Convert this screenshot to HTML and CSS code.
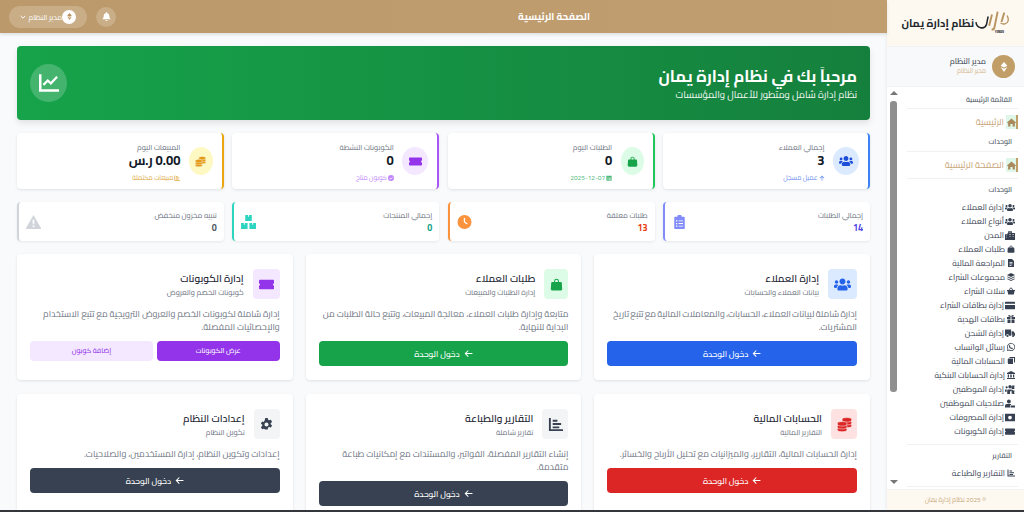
FILE: index.html
```html
<!DOCTYPE html>
<html lang="ar" dir="rtl">
<head>
<meta charset="utf-8">
<title>الصفحة الرئيسية</title>
<link rel="stylesheet" href="styles.css">
</head>
<body>
<svg class="defs" aria-hidden="true">
<symbol id="i-users" viewBox="0 0 640 512"><path d="M96 224c35.300 0 64-28.700 64-64s-28.700-64-64-64-64 28.700-64 64 28.700 64 64 64zm448 0c35.300 0 64-28.700 64-64s-28.700-64-64-64-64 28.700-64 64 28.700 64 64 64zm32 32h-64c-17.600 0-33.500 7.100-45.100 18.600 40.300 22.100 68.900 62 75.100 109.400h66c17.700 0 32-14.300 32-32v-32c0-35.300-28.700-64-64-64zm-256 0c61.900 0 112-50.100 112-112S381.900 32 320 32 208 82.100 208 144s50.100 112 112 112zm76.800 32h-8.300c-20.800 10-43.900 16-68.500 16s-47.600-6-68.500-16h-8.300C179.600 288 128 339.600 128 403.200V432c0 26.500 21.500 48 48 48h288c26.500 0 48-21.500 48-48v-28.800c0-63.600-51.600-115.200-115.200-115.200zm-223.700-13.400C161.500 263.100 145.600 256 128 256H64c-35.300 0-64 28.700-64 64v32c0 17.700 14.300 32 32 32h65.900c6.300-47.400 34.900-87.300 75.200-109.400z"/></symbol>
<symbol id="i-bag" viewBox="0 0 16 16"><path d="M5 5V4a3 3 0 0 1 6 0v1h2.500a1 1 0 0 1 1 1l.5 7.500a2 2 0 0 1-2 2H3a2 2 0 0 1-2-2L1.500 6a1 1 0 0 1 1-1zm1.300 0h3.400V4a1.700 1.700 0 0 0-3.400 0z"/></symbol>
<symbol id="i-ticket" viewBox="0 0 16 12"><path d="M1 1h14a1 1 0 0 1 1 1v2.800a1.200 1.200 0 0 0 0 2.400V10a1 1 0 0 1-1 1H1a1 1 0 0 1-1-1V7.200a1.200 1.200 0 0 0 0-2.400V2a1 1 0 0 1 1-1z"/></symbol>
<symbol id="i-coins" viewBox="0 0 16 16"><g stroke="#fff" stroke-opacity=".75" stroke-width=".7"><ellipse cx="10.500" cy="9" rx="5.200" ry="2.400"/><ellipse cx="10.500" cy="6" rx="5.200" ry="2.400"/><ellipse cx="10.500" cy="3" rx="5.200" ry="2.400"/><ellipse cx="5.500" cy="13.300" rx="5.200" ry="2.400"/><ellipse cx="5.500" cy="10.300" rx="5.200" ry="2.400"/><ellipse cx="5.500" cy="7.300" rx="5.200" ry="2.400"/></g></symbol>
<symbol id="i-chart" viewBox="0 0 16 16"><path d="M0 1h2v12h14v2H0z"/><path d="M3.500 9.500 7 6l2.500 2.300L14.500 3" fill="none" stroke="currentColor" stroke-width="1.800"/></symbol>
<symbol id="i-bars" viewBox="0 0 16 16"><path d="M1 1h2v12h13v2H1zM5 3h5v2H5zm0 3.500h9v2H5zM5 10h7v2H5z"/></symbol>
<symbol id="i-cal" viewBox="0 0 16 16"><path d="M1 2h14v13H1z"/><path d="M3 6h10v7H3z" fill="#fff" opacity=".3"/><path d="M9 9h3v3H9z" fill="#fff"/></symbol>
<symbol id="i-check" viewBox="0 0 16 16"><path fill-rule="evenodd" d="M8 0a8 8 0 1 1 0 16A8 8 0 0 1 8 0zm3.600 5.200L7 9.800 4.800 7.600 3.600 8.800 7 12.200l5.800-5.800z"/></symbol>
<symbol id="i-up" viewBox="0 0 16 16"><path d="M7 15V5L3 9 1.700 7.700 8 1l6.300 6.700L13 9 9 5v10z"/></symbol>
<symbol id="i-clip" viewBox="0 0 12 16"><path d="M1 2h2.500a2.500 2.500 0 0 1 5 0H11a1 1 0 0 1 1 1v12a1 1 0 0 1-1 1H1a1 1 0 0 1-1-1V3a1 1 0 0 1 1-1z"/><path d="M2 6h1.500v1.500H2zm3 .200h5v1H5zm-3 2.800h1.500v1.500H2zm3 .200h5v1H5zM2 12h1.500v1.500H2zm3 .200h5v1H5z" fill="#fff"/></symbol>
<symbol id="i-clock" viewBox="0 0 16 16"><path d="M8 0a8 8 0 1 1 0 16A8 8 0 0 1 8 0z"/><path d="M7.200 3.500h1.500v4.200l3 2-.8 1.200-3.700-2.500z" fill="#fff"/></symbol>
<symbol id="i-boxes" viewBox="0 0 16 15"><path d="M4.500 0h3v2h1V0h3v6.500h-7zM0 8.500h3v2h1v-2h3V15H0zM9 8.500h3v2h1v-2h3V15H9z"/></symbol>
<symbol id="i-warn" viewBox="0 0 16 15"><path fill-rule="evenodd" d="M8 0l8 14a.7.7 0 0 1-.6 1H.6a.7.7 0 0 1-.6-1zM7 5l.3 5h1.400L9 5zm1 6a1 1 0 1 0 0 2 1 1 0 0 0 0-2z"/></symbol>
<symbol id="i-gear" viewBox="0 0 16 16"><path fill-rule="evenodd" d="M6.500 0h3l.5 2.200 1.200.7 2.200-.7 1.500 2.600-1.700 1.500v1.400l1.700 1.500-1.500 2.600-2.200-.7-1.200.7-.5 2.200h-3L6 13.800l-1.200-.7-2.200.7-1.500-2.600 1.700-1.500V8.300L1.100 6.800l1.500-2.600 2.200.7L6 2.200zM8 5.500a2.500 2.500 0 1 0 0 5 2.500 2.500 0 0 0 0-5z"/></symbol>
<symbol id="i-arrow" viewBox="0 0 16 16"><path d="M7 2 8.300 3.300 4.600 7H15v2H4.600l3.700 3.700L7 14 1 8z"/></symbol>
<symbol id="i-bell" viewBox="0 0 16 16"><path d="M8 0a1 1 0 0 1 1 1v.8A5 5 0 0 1 13 6.700c0 3 .8 4.300 2 5.300v1H1v-1c1.200-1 2-2.300 2-5.300A5 5 0 0 1 7 1.800V1a1 1 0 0 1 1-1zM6 14h4a2 2 0 0 1-4 0z"/></symbol>
<symbol id="i-home" viewBox="0 0 16 14"><path d="M8 0l8 7-1 1.200-1-.8V14h-4V9.500H6V14H2V7.400l-1 .8L0 7z"/></symbol>
<symbol id="i-diamond" viewBox="0 0 12 12"><path d="M6 0l4 4.500L6 6.500 2 4.500zM2 6l4 2 4-2-4 6z"/></symbol>
<symbol id="i-city" viewBox="0 0 16 14"><path fill-rule="evenodd" d="M0 5h4V3h1V0h6v3h5v11H0zm7-3v1h2V2zm0 3v1h2V5zm0 3v1h2V8zM2 7v1h1V7zm0 3v1h1v-1zm10-5v1h2V5zm0 3v1h2V8z"/></symbol>
<symbol id="i-doc" viewBox="0 0 12 16"><path fill-rule="evenodd" d="M0 0h8l4 4v12H0zm3 6v1.500h6V6zm0 3v1.500h6V9zm0 3v1.500h4V12z"/></symbol>
<symbol id="i-layers" viewBox="0 0 16 16"><path d="M8 0l8 4-8 4-8-4zM1.500 6.800 8 10l6.500-3.200L16 8l-8 4-8-4zm0 4L8 14l6.500-3.200L16 12l-8 4-8-4z"/></symbol>
<symbol id="i-basket" viewBox="0 0 16 14"><path d="M0 5h3.500L7 0l1.200.8L5.300 5h5.400L7.800.8 9 0l3.500 5H16v2h-1l-1.400 7H2.400L1 7H0z"/></symbol>
<symbol id="i-card" viewBox="0 0 16 12"><path d="M1 0h14a1 1 0 0 1 1 1v2H0V1a1 1 0 0 1 1-1zM0 5h16v6a1 1 0 0 1-1 1H1a1 1 0 0 1-1-1z"/></symbol>
<symbol id="i-gift" viewBox="0 0 16 16"><path d="M0 4h7v4H0zm9 0h7v4H9zM1 9h6v7H1zm8 0h6v7H9zM4 0c2 0 3.500 1.500 4 3.500C8.500 1.500 10 0 12 0s2 3.500-1 3.500H5C2 3.500 2 0 4 0z"/></symbol>
<symbol id="i-truck" viewBox="0 0 18 14"><path d="M0 0h11v11H7a2.500 2.500 0 0 0-5 0H0zm12 3h3l3 4v4h-1.500a2.500 2.500 0 0 0-4.500-.5zM4.500 9.500a2 2 0 1 1 0 4 2 2 0 0 1 0-4zm10 0a2 2 0 1 1 0 4 2 2 0 0 1 0-4z"/></symbol>
<symbol id="i-wa" viewBox="0 0 16 16"><path fill-rule="evenodd" d="M8 0a8 8 0 1 1-3.800 15L0 16l1.100-4.100A8 8 0 0 1 8 0zm0 1.500a6.500 6.500 0 0 0-5.400 10l-.6 2.300 2.400-.6A6.500 6.500 0 1 0 8 1.500zM5.500 4.200l1.200 2-.7 1c.6 1.200 1.500 2 2.800 2.700l1-.8 2 1.200c-.2 1.300-1.500 2-2.700 1.700-3-.6-5-3-5.300-5.500 0-1 .7-2 1.700-2.300z"/></symbol>
<symbol id="i-ledger" viewBox="0 0 16 16"><path d="M5 0h11v11h-2V2H5zM2 3h10v11H2zM0 5h1v2H0zm0 4h1v2H0z"/></symbol>
<symbol id="i-bank" viewBox="0 0 16 16"><path d="M8 0l8 4v2H0V4zM1.500 7h2.500v6H1.500zm5 0h3v6h-3zm5.500 0h2.500v6H12zM0 14h16v2H0z"/></symbol>
<symbol id="i-ucog" viewBox="0 0 18 16"><path d="M3 2a2 2 0 1 1 0 4 2 2 0 0 1 0-4zm6-2a3 3 0 1 1 0 6 3 3 0 0 1 0-6zM5 8h7v3H9v5H4V9zM0 8h3v4H0zm14-8 1 1 2 0v2l-1 1 1 1v2h-2l-1 1-1-1h-1V2h1zm0 9 1 1h2v2l-1 1 1 1v2h-3l-1-1-1 1v-6z"/></symbol>
<symbol id="i-ulock" viewBox="0 0 18 14"><path d="M7 0a3.500 3.500 0 1 1 0 7 3.500 3.500 0 0 1 0-7zM3 8h8v1.500H9V14H0v-2.500A3.500 3.500 0 0 1 3 8zm7 2.500h8V14h-8z"/></symbol>
<symbol id="i-money" viewBox="0 0 16 12"><path fill-rule="evenodd" d="M0 0h16v12H0zm8 3a3 3 0 1 0 0 6 3 3 0 0 0 0-6z"/></symbol>
</svg>

<div class="app">
  <aside class="side">
    <div class="brand">
      <svg class="logo" viewBox="0 0 36 24" aria-hidden="true">
        <path d="M1 11c1 7 9 8 11 3 1-3 1-6 2-9" fill="none" stroke="#23262b" stroke-width="1.600"/>
        <path d="M18 3l-3 12M24 0l-3.500 17c-.4 2-2 2-3 2M31 1l-3 10" fill="none" stroke="#b9935f" stroke-width="2"/>
        <path d="M27 12c3 2 7 1 8-2 .5-2 0-4-1-6" fill="none" stroke="#b9935f" stroke-width="1.400"/>
        <text class="logo-mark" x="21" y="23" direction="ltr">YEMAN</text>
      </svg>
      <span class="brand-name">نظام إدارة يمان</span>
    </div>
    <div class="user">
      <span class="avatar"><svg class="ico i10"><use href="#i-diamond"/></svg></span>
      <div class="user-text">
        <div class="user-name">مدير النظام</div>
        <div class="user-role">مدير النظام</div>
      </div>
    </div>
    <div class="side-body">
      <nav class="nav">
        <div class="nav-label lab-a">القائمة الرئيسية</div>
        <a class="nav-main"><span class="nav-home"><svg class="ico i9"><use href="#i-home"/></svg></span>الرئيسية</a>
        <div class="nav-label lab-b">الوحدات</div>
        <div class="nav-sec">
          <a class="nav-main"><span class="nav-home"><svg class="ico i9"><use href="#i-home"/></svg></span>الصفحة الرئيسية</a>
        </div>
        <div class="nav-label lab-c">الوحدات</div>
        <ul class="nav-list nav-sec">
          <li><svg class="ico"><use href="#i-users"/></svg>إدارة العملاء</li>
          <li><svg class="ico"><use href="#i-users"/></svg>أنواع العملاء</li>
          <li><svg class="ico"><use href="#i-city"/></svg>المدن</li>
          <li class="n"><svg class="ico"><use href="#i-bag"/></svg>طلبات العملاء</li>
          <li class="n"><svg class="ico"><use href="#i-doc"/></svg>المراجعة المالية</li>
          <li class="n"><svg class="ico"><use href="#i-layers"/></svg>مجموعات الشراء</li>
          <li class="n"><svg class="ico"><use href="#i-basket"/></svg>سلات الشراء</li>
          <li><svg class="ico"><use href="#i-card"/></svg>إدارة بطاقات الشراء</li>
          <li class="n"><svg class="ico"><use href="#i-gift"/></svg>بطاقات الهدية</li>
          <li><svg class="ico"><use href="#i-truck"/></svg>إدارة الشحن</li>
          <li class="n"><svg class="ico"><use href="#i-wa"/></svg>رسائل الواتساب</li>
          <li class="n"><svg class="ico"><use href="#i-ledger"/></svg>الحسابات المالية</li>
          <li class="n"><svg class="ico"><use href="#i-bank"/></svg>إدارة الحسابات البنكية</li>
          <li><svg class="ico"><use href="#i-ucog"/></svg>إدارة الموظفين</li>
          <li><svg class="ico"><use href="#i-ulock"/></svg>صلاحيات الموظفين</li>
          <li><svg class="ico"><use href="#i-money"/></svg>إدارة المصروفات</li>
          <li><svg class="ico"><use href="#i-ticket"/></svg>إدارة الكوبونات</li>
        </ul>
        <div class="nav-label lab-c">التقارير</div>
        <ul class="nav-list nav-sec">
          <li class="n"><svg class="ico"><use href="#i-bars"/></svg>التقارير والطباعة</li>
        </ul>
      </nav>
      <div class="scrollbar">
        <span class="arr-up"></span>
        <span class="thumb"></span>
        <span class="arr-down"></span>
      </div>
    </div>
    <footer class="side-foot">© 2025 نظام إدارة يمان</footer>
  </aside>

  <div class="main">
    <header class="top">
      <h1 class="top-title">الصفحة الرئيسية</h1>
      <div class="top-tools">
        <span class="bell"><svg class="ico i9"><use href="#i-bell"/></svg></span>
        <span class="pill">
          <span class="pill-av"><svg class="ico i7"><use href="#i-diamond"/></svg></span>
          <span class="pill-name">مدير النظام</span>
          <svg class="chev" viewBox="0 0 10 6"><path d="M1 1l4 4 4-4" fill="none" stroke="#fff" stroke-width="1.600"/></svg>
        </span>
      </div>
    </header>

    <main class="content">
      <section class="hero">
        <div>
          <h2 class="hero-title">مرحباً بك في نظام إدارة يمان</h2>
          <p class="hero-sub">نظام إدارة شامل ومتطور للأعمال والمؤسسات</p>
        </div>
        <span class="hero-ico"><svg class="ico i20"><use href="#i-chart"/></svg></span>
      </section>

      <section class="stats">
        <div class="stat c-blue">
          <span class="stat-ico w26"><svg class="ico i14"><use href="#i-users"/></svg></span>
          <div class="stat-text"><div class="stat-label">إجمالي العملاء</div><div class="stat-val">3</div><div class="stat-sub"><svg class="ico i6"><use href="#i-up"/></svg>عميل مسجل</div></div>
        </div>
        <div class="stat c-green">
          <span class="stat-ico w23"><svg class="ico i11"><use href="#i-bag"/></svg></span>
          <div class="stat-text"><div class="stat-label">الطلبات اليوم</div><div class="stat-val">0</div><div class="stat-sub"><svg class="ico i6"><use href="#i-cal"/></svg>2025-12-07</div></div>
        </div>
        <div class="stat c-purple">
          <span class="stat-ico w26"><svg class="ico i13"><use href="#i-ticket"/></svg></span>
          <div class="stat-text"><div class="stat-label">الكوبونات النشطة</div><div class="stat-val">0</div><div class="stat-sub"><svg class="ico i6"><use href="#i-check"/></svg>كوبون متاح</div></div>
        </div>
        <div class="stat c-amber">
          <span class="stat-ico w24"><svg class="ico i11"><use href="#i-coins"/></svg></span>
          <div class="stat-text"><div class="stat-label">المبيعات اليوم</div><div class="stat-val">0.00 ر.س</div><div class="stat-sub"><svg class="ico i6"><use href="#i-bars"/></svg>مبيعات مكتملة</div></div>
        </div>
      </section>

      <section class="minis">
        <div class="mini m-indigo"><div><div class="mini-label">إجمالي الطلبات</div><div class="mini-val">14</div></div><svg class="mini-ico"><use href="#i-clip"/></svg></div>
        <div class="mini m-orange"><div><div class="mini-label">طلبات معلقة</div><div class="mini-val">13</div></div><svg class="mini-ico"><use href="#i-clock"/></svg></div>
        <div class="mini m-teal"><div><div class="mini-label">إجمالي المنتجات</div><div class="mini-val">0</div></div><svg class="mini-ico"><use href="#i-boxes"/></svg></div>
        <div class="mini m-gray"><div><div class="mini-label">تنبيه مخزون منخفض</div><div class="mini-val">0</div></div><svg class="mini-ico"><use href="#i-warn"/></svg></div>
      </section>

      <section class="mods">
        <article class="mod">
          <div class="mod-head"><span class="mod-ico tint-blue w29"><svg class="ico i17"><use href="#i-users"/></svg></span><div><h3 class="mod-title">إدارة العملاء</h3><div class="mod-sub">بيانات العملاء والحسابات</div></div></div>
          <p class="mod-desc tight">إدارة شاملة لبيانات العملاء، الحسابات، والمعاملات المالية مع تتبع تاريخ المشتريات.</p>
          <a class="btn b-blue"><svg class="ico i9"><use href="#i-arrow"/></svg>دخول الوحدة</a>
        </article>
        <article class="mod">
          <div class="mod-head"><span class="mod-ico tint-green w24"><svg class="ico i13"><use href="#i-bag"/></svg></span><div><h3 class="mod-title">طلبات العملاء</h3><div class="mod-sub">إدارة الطلبات والمبيعات</div></div></div>
          <p class="mod-desc">متابعة وإدارة طلبات العملاء، معالجة المبيعات، وتتبع حالة الطلبات من البداية للنهاية.</p>
          <a class="btn b-green"><svg class="ico i9"><use href="#i-arrow"/></svg>دخول الوحدة</a>
        </article>
        <article class="mod">
          <div class="mod-head"><span class="mod-ico tint-purple w27"><svg class="ico i15"><use href="#i-ticket"/></svg></span><div><h3 class="mod-title">إدارة الكوبونات</h3><div class="mod-sub">كوبونات الخصم والعروض</div></div></div>
          <p class="mod-desc">إدارة شاملة لكوبونات الخصم والعروض الترويجية مع تتبع الاستخدام والإحصائيات المفصلة.</p>
          <div class="btn-pair"><a class="btn small b-purple">عرض الكوبونات</a><a class="btn small b-lilac">إضافة كوبون</a></div>
        </article>
        <article class="mod">
          <div class="mod-head"><span class="mod-ico tint-red w26"><svg class="ico i15"><use href="#i-coins"/></svg></span><div><h3 class="mod-title">الحسابات المالية</h3><div class="mod-sub">التقارير المالية</div></div></div>
          <p class="mod-desc">إدارة الحسابات المالية، التقارير، والميزانيات مع تحليل الأرباح والخسائر.</p>
          <a class="btn b-red"><svg class="ico i9"><use href="#i-arrow"/></svg>دخول الوحدة</a>
        </article>
        <article class="mod">
          <div class="mod-head"><span class="mod-ico tint-gray w26"><svg class="ico i15"><use href="#i-bars"/></svg></span><div><h3 class="mod-title">التقارير والطباعة</h3><div class="mod-sub">تقارير شاملة</div></div></div>
          <p class="mod-desc">إنشاء التقارير المفصلة، الفواتير، والمستندات مع إمكانيات طباعة متقدمة.</p>
          <a class="btn b-dark"><svg class="ico i9"><use href="#i-arrow"/></svg>دخول الوحدة</a>
        </article>
        <article class="mod">
          <div class="mod-head"><span class="mod-ico tint-gray w26"><svg class="ico i13"><use href="#i-gear"/></svg></span><div><h3 class="mod-title">إعدادات النظام</h3><div class="mod-sub">تكوين النظام</div></div></div>
          <p class="mod-desc">إعدادات وتكوين النظام، إدارة المستخدمين، والصلاحيات.</p>
          <a class="btn b-dark"><svg class="ico i9"><use href="#i-arrow"/></svg>دخول الوحدة</a>
        </article>
      </section>
    </main>
  </div>
</div>
<div class="edge"></div>
</body>
</html>
```

FILE: styles.css
```css
* { box-sizing: border-box; margin: 0; padding: 0; }
html, body { height: 512px; overflow: hidden; }
body {
  font-family: "Cairo", "Noto Sans", "DejaVu Sans", sans-serif;
  background: #f8fafc;
  color: #1f2937;
  display: flex;
  flex-direction: column;
}
.defs { display: none; }
.ico { width: 8px; height: 8px; fill: currentColor; flex: none; display: block; }
.i6 { width: 6px; height: 6px; }
.i7 { width: 7px; height: 7px; }
.i8 { width: 8px; height: 8px; }
.i9 { width: 9px; height: 9px; }
.i10 { width: 10px; height: 10px; }
.i11 { width: 11px; height: 11px; }
.i12 { width: 12px; height: 12px; }
.i13 { width: 13px; height: 13px; }
.i14 { width: 14px; height: 14px; }
.i15 { width: 15px; height: 15px; }
.i16 { width: 16px; height: 16px; }
.i17 { width: 17px; height: 17px; }
.i20 { width: 20px; height: 20px; }

.app { flex: 1; min-height: 0; display: flex; }
.edge { height: 2px; background: #33363b; flex: none; }

/* sidebar */
.side { width: 137px; flex: none; background: #fff; display: flex; flex-direction: column; box-shadow: -1px 0 3px rgba(0,0,0,.06); }
.brand { height: 46px; flex: none; background: #fdf9f0; display: flex; align-items: center; padding-right: 15px; gap: 1px; }
.logo { width: 34px; height: 24px; flex: none; }
.logo-mark { font-size: 3px; font-weight: 700; fill: #23262b; }
.brand-name { font-size: 10.800px; font-weight: 700; line-height: 14px; color: #23262b; white-space: nowrap; }
.user { height: 41px; flex: none; background: #f8f9fa; display: flex; align-items: center; gap: 6px; padding-right: 9px; border-top: 1px solid #f1f2f4; border-bottom: 1px solid #f1f2f4; }
.avatar { width: 23px; height: 23px; border-radius: 50%; background: #c19e68; color: #fff; display: flex; align-items: center; justify-content: center; flex: none; }
.user-name { font-size: 8px; line-height: 10px; font-weight: 500; color: #374151; }
.user-role { font-size: 6.500px; line-height: 9px; color: #d4b68c; }
.side-body { flex: 1; min-height: 0; display: flex; overflow: hidden; }
.nav { flex: 1; min-width: 0; padding: 0 6px 0 7px; }
.nav-label { font-size: 7px; font-weight: 600; line-height: 8px; color: #4b5563; display: flex; align-items: flex-end; padding-right: 6px; }
.lab-a { height: 22px; padding-bottom: 4px; border-bottom: 1px solid #f0f1f3; margin-bottom: 6px; }
.lab-b { height: 23px; padding-bottom: 5px; border-bottom: 1px solid #f0f1f3; margin-bottom: 6px; }
.lab-c { height: 21px; padding-bottom: 6px; }
.nav-sec { padding-bottom: 6px; border-bottom: 1px solid #f0f1f3; }
.nav-main { display: flex; align-items: center; gap: 2px; height: 14px; font-size: 9px; line-height: 14px; color: #c8a67a; border-right: 2px solid #c19e68; white-space: nowrap; }
.nav-home { width: 10px; height: 14px; background: #dff7e8; color: #a98a5d; display: flex; align-items: center; justify-content: center; }
.nav-list { list-style: none; }
.nav-list li { display: flex; align-items: center; gap: 1px; height: 14px; font-size: 8.200px; line-height: 14px; color: #374151; white-space: nowrap; padding-right: 3px; }
.nav-list .ico { width: 10px; height: 9px; }
.nav-list .n { gap: 2px; padding-right: 3px; }
.nav-list .n .ico { width: 8px; height: 8px; }
.scrollbar { width: 13px; flex: none; display: flex; flex-direction: column; align-items: center; padding-top: 4px; }
.arr-up, .arr-down { width: 0; height: 0; border-left: 4px solid transparent; border-right: 4px solid transparent; flex: none; }
.arr-up { border-bottom: 4px solid #777; margin-bottom: 6px; }
.arr-down { border-top: 4px solid #777; margin-top: 88px; }
.thumb { width: 7px; height: 291px; background: #8f8f8f; border-radius: 3px; flex: none; }
.side-foot { height: 21px; flex: none; background: #fdf9f0; border-top: 1px solid #f1f2f4; color: #c8a67a; font-size: 6.500px; text-align: center; line-height: 20px; }

/* top */
.main { flex: 1; min-width: 0; display: flex; flex-direction: column; }
.top { height: 33px; flex: none; background: linear-gradient(270deg, #c09e6f, #bb996a); display: flex; align-items: center; justify-content: space-between; padding: 0 0 0 9px; box-shadow: 0 2px 3px rgba(0,0,0,.1); position: relative; }
.top-title { font-size: 9.800px; font-weight: 700; line-height: 14px; color: #fff; margin-right: 297px; white-space: nowrap; }
.top-tools { display: flex; align-items: center; gap: 9px; }
.bell { width: 20px; height: 20px; border-radius: 50%; background: rgba(255,255,255,.2); color: #fff; display: flex; align-items: center; justify-content: center; }
.pill { width: 78px; height: 22px; border-radius: 11px; background: rgba(255,255,255,.2); display: flex; align-items: center; padding: 0 11px 0 0; color: #fff; font-size: 7.500px; line-height: 10px; white-space: nowrap; }
.pill-av { width: 14px; height: 14px; border-radius: 50%; background: #fff; color: #b9935f; display: flex; align-items: center; justify-content: center; flex: none; }
.chev { width: 6px; height: 4px; margin-right: 2px; flex: none; }

/* content */
.content { flex: 1; min-height: 0; padding: 13px 17px 0 17px; overflow: hidden; }
.hero { height: 74px; border-radius: 4px; background: linear-gradient(90deg, #16a34a, #15803d); box-shadow: 0 3px 6px rgba(0,0,0,.1); color: #fff; display: flex; align-items: center; justify-content: space-between; padding: 0 13px; }
.hero-title { font-size: 16.300px; font-weight: 700; line-height: 24px; }
.hero-sub { font-size: 9.700px; line-height: 14px; opacity: .95; }
.hero-ico { width: 37px; height: 38px; border-radius: 50%; background: rgba(255,255,255,.2); display: flex; align-items: center; justify-content: center; }

.stats { display: grid; grid-template-columns: repeat(4, 1fr); gap: 8.500px; margin-top: 13px; }
.stat { height: 56px; background: #fff; border-radius: 4px; border-right: 2px solid var(--c); box-shadow: 0 1px 3px rgba(0,0,0,.1); display: flex; align-items: center; gap: 8.500px; padding-right: 9px; }
.c-blue { --c: #3b82f6; --t: #dbeafe; --i: #1d4ed8; --s: #6d8ff0; }
.c-green { --c: #22c55e; --t: #dcfce7; --i: #16a34a; --s: #4cb878; }
.c-purple { --c: #a855f7; --t: #f3e8ff; --i: #9333ea; --s: #c084fc; }
.c-amber { --c: #eaa511; --t: #fef9c3; --i: #e39a14; --s: #e0a83e; }
.stat-ico { height: 28px; border-radius: 50%; background: var(--t); color: var(--i); display: flex; align-items: center; justify-content: center; flex: none; }
.stat-text { align-self: flex-start; padding-top: 9px; }
.w23 { width: 23px; } .w24 { width: 24px; } .w26 { width: 26px; } .w27 { width: 27px; } .w29 { width: 29px; }
.stat-label { font-size: 7.500px; line-height: 10px; color: #6b7280; }
.stat-val { font-size: 13px; font-weight: 700; line-height: 16px; color: #111827; }
.stat-sub { font-size: 6.500px; line-height: 10px; color: var(--s); display: flex; align-items: center; gap: 1px; margin-top: 5px; }

.minis { display: grid; grid-template-columns: repeat(4, 1fr); gap: 8.500px; margin-top: 13px; }
.mini { height: 39px; background: #fff; border-radius: 4px; border-left: 2px solid var(--c); box-shadow: 0 1px 3px rgba(0,0,0,.08); display: flex; align-items: center; justify-content: space-between; padding: 0 7px; }
.m-indigo { --c: #818cf8; --v: #4f46e5; }
.m-orange { --c: #fb923c; --v: #ea3a0c; }
.m-teal { --c: #2dd4bf; --v: #0d9f85; }
.m-gray { --c: #d1d5db; --v: #4b5563; }
.mini-label { font-size: 7.500px; line-height: 12px; color: #6b7280; }
.mini-val { font-size: 9px; font-weight: 700; line-height: 13px; color: var(--v); }
.mini-ico { width: 15px; height: 14px; fill: var(--c); flex: none; }

.mods { display: grid; grid-template-columns: repeat(3, 1fr); gap: 14px 13px; margin-top: 13px; }
.mod { background: #fff; border-radius: 4px; box-shadow: 0 1px 3px rgba(0,0,0,.1); padding: 15px 13px 12px; display: flex; flex-direction: column; min-height: 126px; }
.mod-head { display: flex; align-items: center; gap: 9px; }
.mod-ico { height: 30px; border-radius: 4px; display: flex; align-items: center; justify-content: center; flex: none; }
.tint-blue { background: #dbeafe; color: #2563eb; }
.tint-green { background: #dcfce7; color: #16a34a; }
.tint-purple { background: #f3e8ff; color: #9333ea; }
.tint-red { background: #fee2e2; color: #dc2626; }
.tint-gray { background: #f3f4f6; color: #374151; }
.mod-title { font-size: 10.200px; font-weight: 600; line-height: 14px; color: #1f2937; }
.mod-sub { font-size: 7.500px; line-height: 10px; color: #6b7280; margin-top: 1px; }
.mod-desc { font-size: 8.900px; line-height: 13px; color: #6b7280; margin: 8px 0; }
.mod-desc.tight { word-spacing: -.7px; }
.btn { height: 25px; border-radius: 4px; display: flex; align-items: center; justify-content: center; gap: 4px; font-size: 8.500px; line-height: 12px; font-weight: 500; color: #fff; white-space: nowrap; }
.btn.small { height: 20px; font-size: 7.100px; flex: 1; }
.btn-pair { display: flex; gap: 4px; }
.b-blue { background: #2563eb; }
.b-green { background: #16a34a; }
.b-red { background: #dc2626; }
.b-dark { background: #374151; }
.b-purple { background: #9333ea; }
.b-lilac { background: #f3e8ff; color: #9333ea; }
```
